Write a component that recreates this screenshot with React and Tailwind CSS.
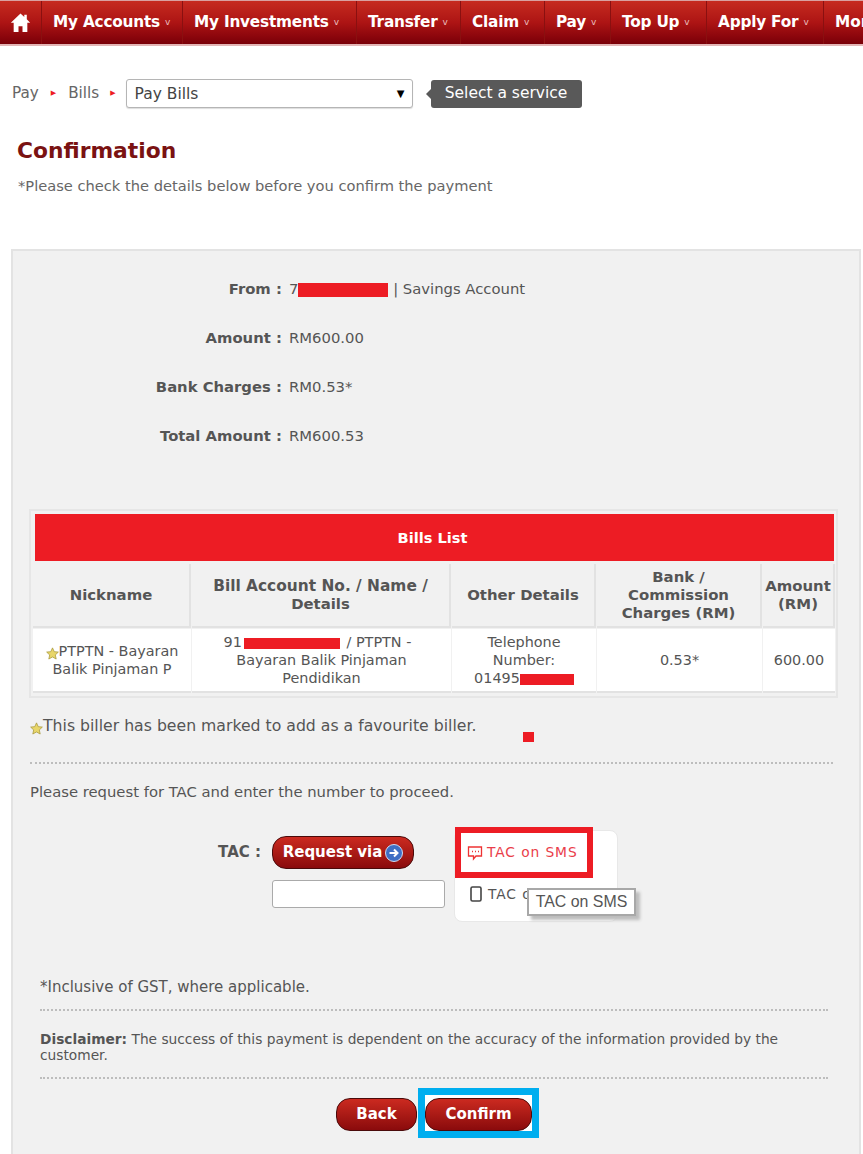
import React from "react";

const font = "font-['DejaVu_Sans',sans-serif]";

/* -------------------- Small drawings -------------------- */

const Star = () => (
  <svg viewBox="0 0 12 12" className="inline-block w-[13px] h-[13px] align-[-4px]">
    <path d="M6 .8l1.6 3.5 3.8.4-2.8 2.6.8 3.8L6 9.2l-3.4 1.9.8-3.8L.6 4.7l3.8-.4z" fill="#e8d66a" stroke="#a8983a" strokeWidth=".7" />
  </svg>
);

const Home = () => (
  <svg viewBox="0 0 20 20" className="w-[21px] h-[21px]">
    <path d="M10 1.5L0.8 10.2h2.7V19h4.6v-5.5h3.8V19h4.6v-8.8h2.7L16 7V2.5h-2.4v2.2z" fill="#fff" />
  </svg>
);

const Caret = () => <span className="ml-[5px] text-[9px] font-normal text-[#e9bdbd] align-[1px]">v</span>;

const Arrow = ({ className = "" }) => <span className={`text-[7px] text-[#ed1c24] align-[2px] ${className}`}>▶</span>;

/* -------------------- Nav -------------------- */

const navItems = [
  { label: "My Accounts", w: "w-[141px]" },
  { label: "My Investments", w: "w-[174px]" },
  { label: "Transfer", w: "w-[104px]" },
  { label: "Claim", w: "w-[84px]" },
  { label: "Pay", w: "w-[66px]" },
  { label: "Top Up", w: "w-[96px]" },
  { label: "Apply For", w: "w-[117px]" },
];

const Nav = () => (
  <div className="h-[47px] flex overflow-hidden bg-white">
    <div className="w-full flex h-[46px] border-t border-[#d9a0a0] border-b-2 border-b-[#e3b5b5] bg-gradient-to-b from-[#c62a1f] via-[#ad1414] to-[#7a0008]">
      <div className="w-[42px] shrink-0 flex items-center justify-center border-r border-[#8a1010]">
        <Home />
      </div>
      {navItems.map((item) => (
        <div
          key={item.label}
          className={`${item.w} shrink-0 flex items-center pl-[11px] border-r border-[#8a1010] text-white font-bold text-[15.3px] tracking-[-0.2px] whitespace-nowrap`}
        >
          {item.label}
          <Caret />
        </div>
      ))}
      <div className="pl-[11px] text-white font-bold text-[15.3px] flex items-center whitespace-nowrap">More</div>
    </div>
  </div>
);

/* -------------------- Table -------------------- */

const Th = ({ children, className = "" }) => (
  <th className={`bg-[#f1f1f1] border-b-2 border-r-2 border-[#e2e2e2] font-bold text-[14.9px] leading-[18px] text-[#555] text-center align-middle ${className}`}>
    {children}
  </th>
);

const Td = ({ children, className = "" }) => (
  <td className={`bg-white border-b-2 border-[#e2e2e2] text-[14.4px] leading-[18px] text-[#555] text-center align-middle ${className}`}>
    {children}
  </td>
);

const Redact = ({ className }) => <span className={`inline-block bg-[#ed1c24] align-middle ${className}`} />;

const BillsTable = () => (
  <div className="ml-[16px] w-[809px] mt-[63px] bg-[#f1f1f1] border-2 border-[#e6e6e6] pt-[3px] pl-[1px] pb-[2px]">
    <div className="ml-[3px] mr-[2px] pr-[4px] h-[47px] bg-[#ed1c24] flex items-center justify-center text-white font-bold text-[14.6px]">
      Bills List
    </div>
    <table className="w-full mt-[2px] table-fixed border-separate border-spacing-x-[1px] border-spacing-y-[1px]">
      <colgroup>
        <col className="w-[158px]" />
        <col className="w-[259px]" />
        <col className="w-[144px]" />
        <col className="w-[165px]" />
        <col className="w-[72px]" />
      </colgroup>
      <thead>
        <tr className="h-[64px]">
          <Th>Nickname</Th>
          <Th>
            <span className="text-[15.4px]">Bill Account No. / Name /</span><br />Details
          </Th>
          <Th>Other Details</Th>
          <Th>
            Bank /<br />Commission<br />Charges (RM)
          </Th>
          <Th className="border-r-0">
            Amount<br />(RM)
          </Th>
        </tr>
      </thead>
      <tbody>
        <tr className="h-[64px]">
          <Td>
            <Star />PTPTN - Bayaran<br />Balik Pinjaman P
          </Td>
          <Td>
            <span className="pr-[8px]">
              91<Redact className="w-[96px] h-[11px] ml-[2px] mr-[2px]" /> / PTPTN -
            </span>
            <br />Bayaran Balik Pinjaman<br />Pendidikan
          </Td>
          <Td>
            Telephone<br />Number:<br />01495<Redact className="w-[54px] h-[11px]" />
          </Td>
          <Td>0.53*</Td>
          <Td>600.00</Td>
        </tr>
      </tbody>
    </table>
  </div>
);

/* -------------------- Bits -------------------- */

const Summary = ({ label, children, className = "" }) => (
  <div className={`flex h-[20px] items-center ${className}`}>
    <div className="w-[274px] shrink-0 text-right font-bold text-[14.8px] text-[#555] whitespace-pre">{label} : </div>
    <div className="pl-[2px] text-[14.8px] text-[#555] whitespace-nowrap">{children}</div>
  </div>
);

const RedButton = ({ children, className = "" }) => (
  <button
    type="button"
    className={`rounded-[14px] border border-[#4a0a0a] bg-gradient-to-b from-[#cc2a20] to-[#8a0a0c] text-white font-bold text-[15px] ${className}`}
  >
    {children}
  </button>
);

const Dotted = ({ className = "" }) => <div className={`border-t-2 border-dotted border-[#bdbdbd] ${className}`} />;

/* -------------------- Main Component -------------------- */

export default function App() {
  return (
    <div className={`${font} w-[863px] h-[1154px] overflow-hidden bg-white text-[#555] antialiased`}>
      <Nav />

      {/* Breadcrumb */}
      <div className="flex items-center mt-[32px] ml-[12px] h-[29px] text-[15.2px] text-[#666]">
        <span>Pay</span>
        <Arrow className="mx-[12px]" />
        <span>Bills</span>
        <Arrow className="ml-[11px] mr-[10px]" />
        <div className="w-[287px] h-[29px] flex items-center justify-between border border-[#b5b5b5] rounded-[3px] bg-white pl-[8px] pr-[7px] shadow-[0_1px_1px_#ddd]">
          <span className="text-[#444] mt-[2px] text-[15.5px]">Pay Bills</span>
          <span className="text-[10px] text-black">▼</span>
        </div>
        <div className="ml-[18px] relative h-[28px] w-[151px] flex items-center justify-center bg-[#595959] rounded-[3px] text-[15.5px] text-white">
          <span className="absolute left-[-5px] top-[9px] w-0 h-0 border-y-[5px] border-y-transparent border-r-[5px] border-r-[#595959]" />
          Select a service
        </div>
      </div>

      <h1 className="mt-[28px] ml-[17px] text-[21.8px] leading-[30px] font-bold text-[#7a1212]">
        Confirmation
      </h1>
      <p className="mt-[11px] ml-[18px] text-[14.65px] leading-[18px] text-[#666]">
        *Please check the details below before you confirm the payment
      </p>

      {/* Panel */}
      <div className="mt-[54px] ml-[11px] mr-[2px] h-[930px] bg-[#f1f1f1] border-2 border-[#e3e3e3] pt-[28px]">
        <Summary label="From">
          7<Redact className="w-[90px] h-[14px]" /> | Savings Account
        </Summary>
        <Summary label="Amount" className="mt-[29px]">RM600.00</Summary>
        <Summary label="Bank Charges" className="mt-[29px]">RM0.53*</Summary>
        <Summary label="Total Amount" className="mt-[29px]">RM600.53</Summary>

        <BillsTable />

        <div className="relative mt-[18px] ml-[17px] h-[20px] text-[15.7px] leading-[20px] text-[#555]">
          <Star />This biller has been marked to add as a favourite biller.
          <span className="absolute left-[493px] top-[16px] w-[11px] h-[10px] bg-[#ed1c24]" />
        </div>

        <Dotted className="mt-[26px] ml-[17px] mr-[26px]" />
        <p className="mt-[19px] ml-[17px] text-[14.8px] leading-[18px] text-[#555]">
          Please request for TAC and enter the number to proceed.
        </p>

        {/* TAC */}
        <div className="flex mt-[28px] h-[93px]">
          <div className="w-[249px] shrink-0 pt-[14px] text-right pr-[1px] font-bold text-[15px] leading-[18px]">TAC :</div>
          <div className="ml-[10px] w-[172px] shrink-0 pt-[7px]">
            <RedButton className="h-[33px] w-[142px] flex items-center justify-center gap-[3px]">
              Request via
              <span className="w-[18px] h-[18px] rounded-full bg-[#3f6fc4] border border-[#cfdcf2] flex items-center justify-center">
                <svg viewBox="0 0 12 12" className="w-[12px] h-[12px]">
                  <path d="M1.5 6h8M6 2.5L9.5 6 6 9.5" fill="none" stroke="#fff" strokeWidth="2" />
                </svg>
              </span>
            </RedButton>
            <div className="mt-[11px] w-[173px] h-[28px] bg-white border border-[#aaa] rounded-[3px]" />
          </div>

          <div className="relative ml-[10px] mt-[1px] w-[164px] h-[92px] bg-white rounded-[8px] border border-[#e8e8e8]">
            <div className="absolute left-0 top-[-4px] w-[138px] h-[51px] border-[6px] border-[#ed1c24] bg-white flex items-center pl-[6px] text-[13.8px] text-[#ea3d4a] whitespace-nowrap tracking-[0.9px]">
              <svg viewBox="0 0 16 16" className="w-[16px] h-[16px] mr-[4px] mt-[1px]">
                <path d="M1.5 2h13v9H9l-2.5 3v-3h-5z" fill="none" stroke="#e33" strokeWidth="1.3" />
                <path d="M5 6.5h1M8 6.5h1M11 6.5h1" stroke="#e33" strokeWidth="1.3" />
              </svg>
              TAC on SMS
            </div>
            <div className="absolute left-[15px] top-[53px] flex items-center text-[13.8px] text-[#555] whitespace-nowrap tracking-[0.9px]">
              <svg viewBox="0 0 12 16" className="w-[12px] h-[16px] mr-[6px]">
                <rect x="1" y="1" width="10" height="14" rx="1.5" fill="none" stroke="#444" strokeWidth="1.6" />
                <rect x="2.5" y="3" width="7" height="9" fill="#fff" />
              </svg>
              TAC o
            </div>
            <div className="absolute left-[72px] top-[57px] w-[109px] h-[28px] flex items-center justify-center bg-white border-2 border-[#a8a8a8] shadow-[4px_4px_3px_#bdbdbd] text-[15.9px] text-[#555] font-['Liberation_Sans',sans-serif] whitespace-nowrap">
              TAC on SMS
            </div>
          </div>
        </div>

        <p className="mt-[56px] ml-[27px] text-[15px] leading-[18px] text-[#555]">*Inclusive of GST, where applicable.</p>
        <Dotted className="mt-[13px] ml-[27px] mr-[31px]" />
        <p className="mt-[20px] ml-[27px] mr-[60px] text-[13.75px] leading-[16px] text-[#555]">
          <b>Disclaimer:</b> The success of this payment is dependent on the accuracy of the information provided by the customer.
        </p>
        <Dotted className="mt-[14px] ml-[27px] mr-[31px]" />

        {/* Buttons */}
        <div className="flex items-start mt-[9px] ml-[323px]">
          <RedButton className="w-[81px] h-[33px] mt-[10px]">Back</RedButton>
          <div className="ml-[1px] border-[7px] border-[#00aeef] pt-[3px] bg-white">
            <RedButton className="w-[107px] h-[33px] block">Confirm</RedButton>
          </div>
        </div>
      </div>
    </div>
  );
}
